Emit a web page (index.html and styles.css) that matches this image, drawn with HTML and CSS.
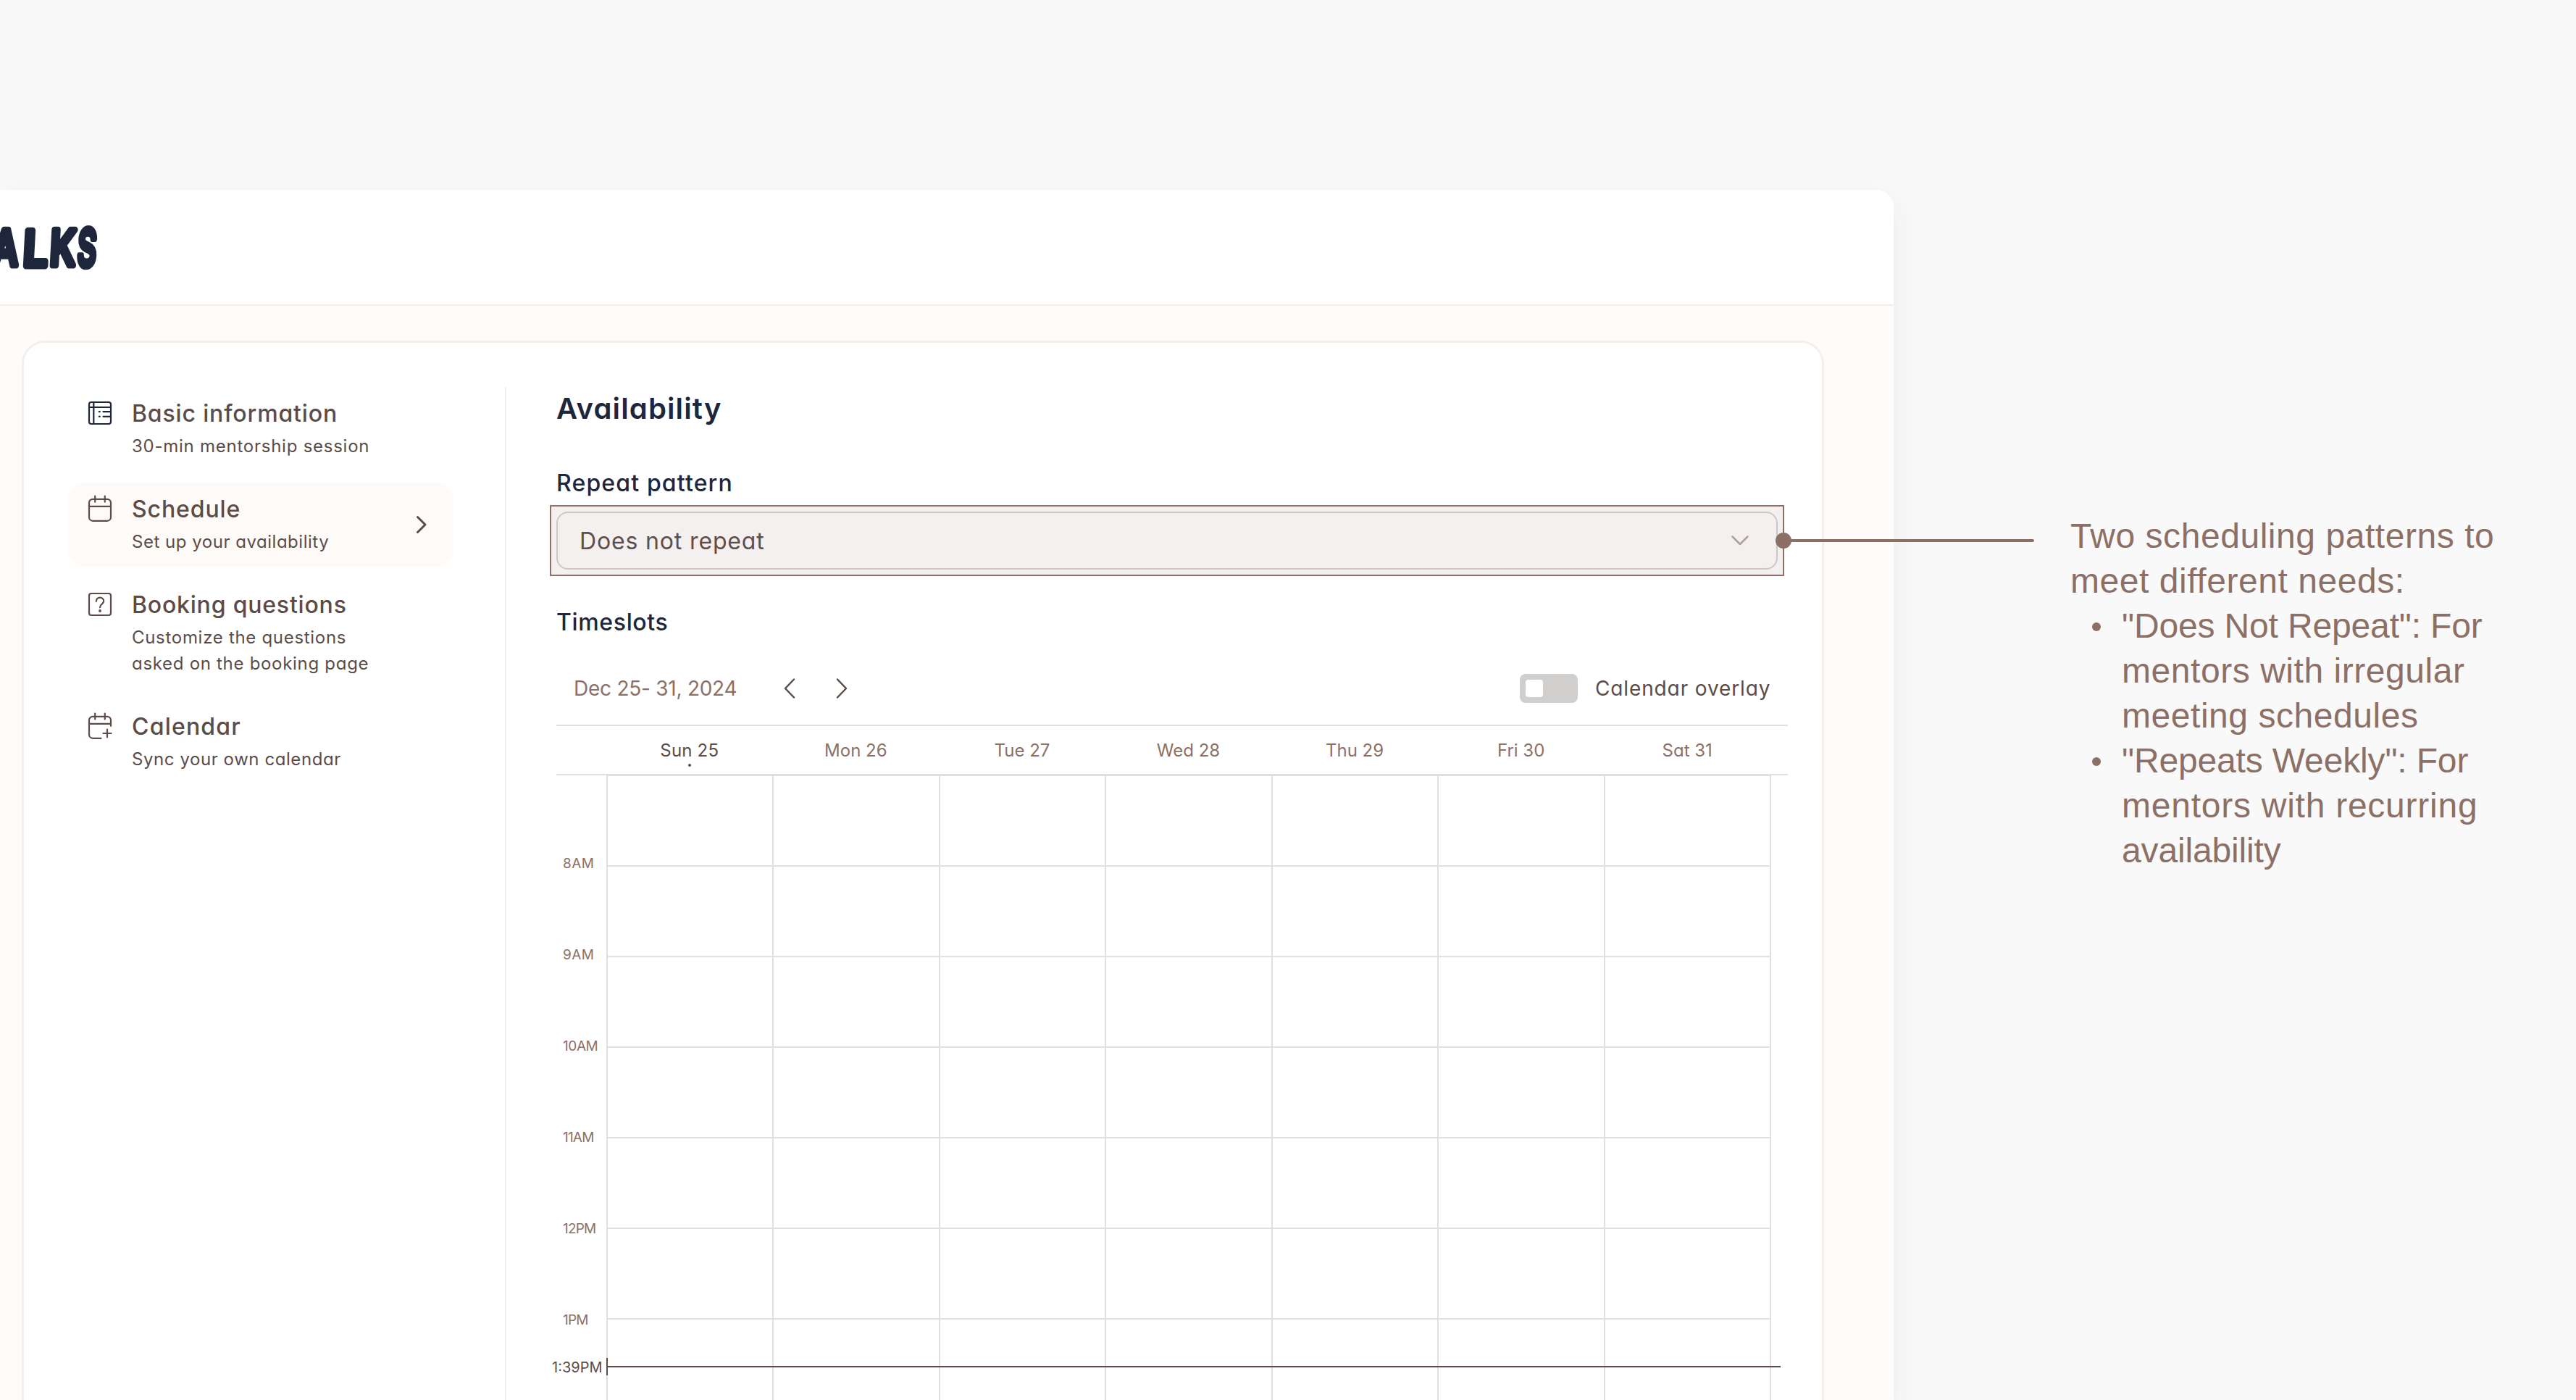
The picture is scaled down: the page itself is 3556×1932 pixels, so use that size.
FILE: index.html
```
<!DOCTYPE html>
<html lang="en">
  <head>
    <meta charset="utf-8">
    <title>Availability</title>
    <link rel="stylesheet" href="styles.css">
  </head>
  <body>
    <div class="app">
      <header class="header">
        <svg class="logo" width="160" height="110" viewBox="0 0 160 110">
          <g transform="translate(0 80) skewX(-3)">
            <text x="-12" y="-1" textLength="36" lengthAdjust="spacingAndGlyphs">A</text>
            <text x="31" y="0" textLength="34" lengthAdjust="spacingAndGlyphs">L</text>
            <text x="68" y="-1" textLength="35" lengthAdjust="spacingAndGlyphs">K</text>
            <text class="tall" x="106" y="0" textLength="26" lengthAdjust="spacingAndGlyphs">S</text>
          </g>
        </svg>
      </header>

      <div class="card">
        <nav class="menu">
          <a class="item">
            <svg class="icon navy" viewBox="0 0 40 40">
              <rect x="5" y="5" width="30" height="30" rx="3"/>
              <path d="M11.3 5v30M5 12h30M24.5 18.2H35M24.5 24.8H35M18.8 18.2h1M18.8 24.8h1"/>
            </svg>
            <div>
              <div class="title t-basic">Basic information</div>
              <div class="sub">30-min mentorship session</div>
            </div>
          </a>
          <a class="item active">
            <svg class="icon" viewBox="0 0 40 40">
              <rect x="5" y="6.8" width="30" height="30" rx="5"/>
              <path d="M5 16.8h30M13.2 2.6v8M26.8 2.6v8"/>
            </svg>
            <div>
              <div class="title">Schedule</div>
              <div class="sub t-set">Set up your availability</div>
            </div>
            <svg class="arrow" width="24" height="32" viewBox="0 0 24 32">
              <path d="M6.5 5.5L17 16L6.5 26.5"/>
            </svg>
          </a>
          <a class="item">
            <svg class="icon" viewBox="0 0 40 40">
              <rect x="5" y="5" width="30" height="30" rx="3"/>
              <path d="M14.8 16c0-3.2 2.2-5.4 5.2-5.4s5.2 2.1 5.2 4.9c0 4.2-5.2 4.2-5.2 8.7"/>
              <circle class="fill" cx="20" cy="29" r="1.9"/>
            </svg>
            <div>
              <div class="title t-booking">Booking questions</div>
              <div class="sub t-custom">Customize the questions<br>asked on the booking page</div>
            </div>
          </a>
          <a class="item">
            <svg class="icon" viewBox="0 0 40 40">
              <path d="M21.5 36.8H10a5 5 0 0 1-5-5v-20a5 5 0 0 1 5-5h20a5 5 0 0 1 5 5v8M5 16.8h30M13.2 2.6v8M26.8 2.6v8M30 24.5v11M24.5 30h11"/>
            </svg>
            <div>
              <div class="title t-calendar">Calendar</div>
              <div class="sub t-sync">Sync your own calendar</div>
            </div>
          </a>
        </nav>

        <main class="content">
          <h1>Availability</h1>
          <label class="field">Repeat pattern</label>
          <div class="select">
            <span>Does not repeat</span>
            <svg width="28" height="20" viewBox="0 0 28 20"><path d="M3.5 4.5L14 15L24.5 4.5"/></svg>
            <div class="highlight">
              <div class="connector"></div>
              <div class="dot"></div>
            </div>
          </div>
          <label class="field timeslots">Timeslots</label>

          <div class="toolbar">
            <span class="range">Dec 25- 31, 2024</span>
            <svg class="nav" width="48" height="48" viewBox="0 0 48 48"><path d="M30 11.5L18 24L30 36.5"/></svg>
            <svg class="nav" width="48" height="48" viewBox="0 0 48 48"><path d="M18 11.5L30 24L18 36.5"/></svg>
            <div class="toggle"><div class="knob"></div></div>
            <span class="overlay">Calendar overlay</span>
          </div>

          <div class="calendar">
            <div class="days">
              <div class="today">Sun 25</div>
              <div>Mon 26</div>
              <div>Tue 27</div>
              <div>Wed 28</div>
              <div>Thu 29</div>
              <div>Fri 30</div>
              <div>Sat 31</div>
            </div>
            <div class="week">
              <div class="hours">
                <div class="am">8AM</div>
                <div class="am">9AM</div>
                <div class="am10">10AM</div>
                <div>11AM</div>
                <div>12PM</div>
                <div>1PM</div>
              </div>
              <div class="slots" id="slots"></div>
              <div class="now">
                <span>1:39PM</span>
                <div class="tick"></div>
                <div class="line"></div>
              </div>
            </div>
          </div>
        </main>
      </div>
    </div>

    <aside class="note">
      Two scheduling patterns to<br>meet different needs:
      <ul>
        <li><span class="tight">"Does Not Repeat": For</span><br>mentors with irregular<br>meeting schedules</li>
        <li><span class="tight">"Repeats Weekly": For</span><br><span class="wide">mentors with recurring</span><br><span class="tight">availability</span></li>
      </ul>
    </aside>

    <script>
      // 7 days x 7 hour rows
      var slots = document.getElementById('slots');
      for (var i = 0; i < 49; i++) {
        slots.appendChild(document.createElement('div'));
      }
    </script>
  </body>
</html>
```
FILE: styles.css
```
* { box-sizing: border-box; }

body {
  margin: 0;
  height: 1932px;
  overflow: hidden;
  display: flex;
  align-items: flex-start;
  background: #f9f9f9;
  color: #5b4c48;
  font-family: Inter, "Open Sans", sans-serif;
  font-feature-settings: "cv11";
  white-space: nowrap;
}
svg { display: block; fill: none; stroke: #5b4c48; stroke-linecap: round; stroke-linejoin: round; flex: none; overflow: visible; }

.app {
  flex: none;
  width: 2614px;
  height: 1670px;
  margin-top: 262px;
  border-radius: 0 24px 0 0;
  background: #fffbf8;
  box-shadow: 0 16px 48px rgba(92, 60, 70, 0.07);
}
.header {
  height: 160px;
  padding-top: 25px;
  border-bottom: 2px solid #f2efef;
  border-radius: 0 24px 0 0;
  background: #fff;
}
.logo text {
  font-size: 67px;
  font-weight: 500;
  fill: #1e263b;
  stroke: #1e263b;
  stroke-width: 9px;
}
.logo .tall { font-size: 70px; }

.card {
  display: flex;
  height: 1462px;
  margin: 48px 96px 0 30px;
  border: 3px solid #f2f0ef;
  border-bottom: none;
  border-radius: 32px 32px 0 0;
  background: #fff;
}

.menu {
  width: 666px;
  margin-top: 61px;
  padding: 0 71px 0 61px;
  border-right: 2px solid #f2f0ef;
}
.item {
  display: flex;
  align-items: flex-start;
  gap: 24px;
  margin-bottom: 16px;
  padding: 16px 32px 16px 24px;
  border-radius: 24px;
}
.active { background: #fefaf7; }
.icon { width: 40px; height: 40px; stroke-width: 2.2px; }
.navy { stroke: #1e263b; }
.fill { fill: #5b4c48; stroke: none; }
.arrow { margin: 26px 0 0 auto; stroke-width: 3px; }
.title { padding-top: 1px; font-size: 32px; font-weight: 500; line-height: 40px; letter-spacing: .9px; }
.sub { margin-top: 7px; font-size: 24px; line-height: 36px; letter-spacing: .75px; }
.t-basic { letter-spacing: .85px; }
.t-booking { letter-spacing: .8px; }
.t-calendar { letter-spacing: 1.2px; }
.t-set { letter-spacing: .52px; }
.t-custom { letter-spacing: .7px; }
.t-sync { letter-spacing: .57px; }

.content { width: 1700px; margin: 61px 0 0 69px; }
h1 {
  margin: 0 0 49px;
  font-size: 40px;
  font-weight: 600;
  line-height: 60px;
  letter-spacing: 1.15px;
  color: #1e263b;
}
.field {
  display: block;
  font-size: 32px;
  font-weight: 500;
  line-height: 48px;
  letter-spacing: 1.15px;
  color: #1e263b;
}
.timeslots { margin: 49px 0 17px; letter-spacing: .65px; }

.select {
  position: relative;
  display: flex;
  align-items: center;
  justify-content: space-between;
  width: 1686px;
  height: 80px;
  margin-top: 15px;
  padding: 0 36px 0 30px;
  border: 2px solid #d6d3d1;
  border-radius: 16px;
  font-size: 32px;
  letter-spacing: .85px;
}
.select span { padding-top: 1px; }
.select svg { stroke: #afa5a1; stroke-width: 2.5px; }
/* box drawn over the select, with a leader line out to the note */
.highlight {
  position: absolute;
  inset: -11px;
  border: 2px solid #8c7066;
  background: rgba(140, 112, 102, 0.1);
}
.connector {
  position: absolute;
  left: 100%;
  top: 45px;
  width: 347px;
  height: 4px;
  border-radius: 0 2px 2px 0;
  background: #8c7066;
}
.dot {
  position: absolute;
  right: -12px;
  top: 36px;
  width: 22px;
  height: 22px;
  border-radius: 50%;
  background: #8c7066;
}

.toolbar {
  display: flex;
  align-items: center;
  height: 100px;
  padding-left: 24px;
  font-size: 28px;
}
.range { width: 274px; letter-spacing: -.25px; color: #8c7066; }
.nav { margin-right: 24px; stroke-width: 2.5px; }
.toggle {
  width: 80px;
  height: 40px;
  margin: 0 24px 0 auto;
  padding: 8px;
  border-radius: 8px;
  background: #d1cfcd;
}
.knob { width: 24px; height: 24px; border-radius: 4px; background: #fff; }
.overlay { width: 266px; letter-spacing: .87px; }

.calendar { border-top: 2px solid #e1e0df; }
.days {
  display: grid;
  grid-template-columns: repeat(7, 1fr);
  height: 68px;
  padding: 0 24px 0 69px;
  border-bottom: 2px solid #e1e0df;
  font-size: 24px;
  line-height: 68px;
  text-align: center;
  color: #8c7066;
}
.today { position: relative; letter-spacing: .2px; color: #5b4c48; }
.today::after {
  content: "";
  position: absolute;
  left: 50%;
  top: 52px;
  width: 4px;
  height: 4px;
  margin-left: -2px;
  border-radius: 50%;
  background: #5b4c48;
}
.week { position: relative; display: flex; }
.hours {
  width: 69px;
  padding: 59px 0 0 9px;
  font-size: 19px;
  line-height: 126px;
  letter-spacing: -.8px;
  color: #8c7066;
}
.hours .am { letter-spacing: .4px; }
.hours .am10 { letter-spacing: -.4px; }
.slots {
  display: grid;
  grid-template-columns: repeat(7, 1fr);
  grid-template-rows: 126px;
  grid-auto-rows: 125px;
  width: 1608px;
  height: 862px;
  overflow: hidden;
  border-left: 2px solid #e1e0df;
  box-shadow: inset 0 1px #e1e0df;
}
.slots div { border: solid #e1e0df; border-width: 0 2px 2px 0; }
.now {
  position: absolute;
  left: -6px;
  top: 804px;
  display: flex;
  align-items: center;
  height: 24px;
  font-size: 20px;
}
.now span { width: 75px; padding-top: 1px; }
.tick { width: 2px; height: 24px; background: #5b4c48; }
.line { width: 1619px; height: 2px; background: #5b4c48; }

.note {
  margin: 709px 0 0 244px;
  font-family: "Liberation Sans", Arial, sans-serif;
  font-size: 48px;
  line-height: 62px;
  letter-spacing: .55px;
  color: #8c7066;
}
.note ul { margin: 0; padding: 0 0 0 71px; list-style: none; }
.note li { position: relative; }
.note li::before {
  content: "";
  position: absolute;
  left: -41px;
  top: 26px;
  width: 12px;
  height: 12px;
  border-radius: 50%;
  background: #8c7066;
}
.tight { letter-spacing: -.15px; }
.wide { letter-spacing: .75px; }
```
